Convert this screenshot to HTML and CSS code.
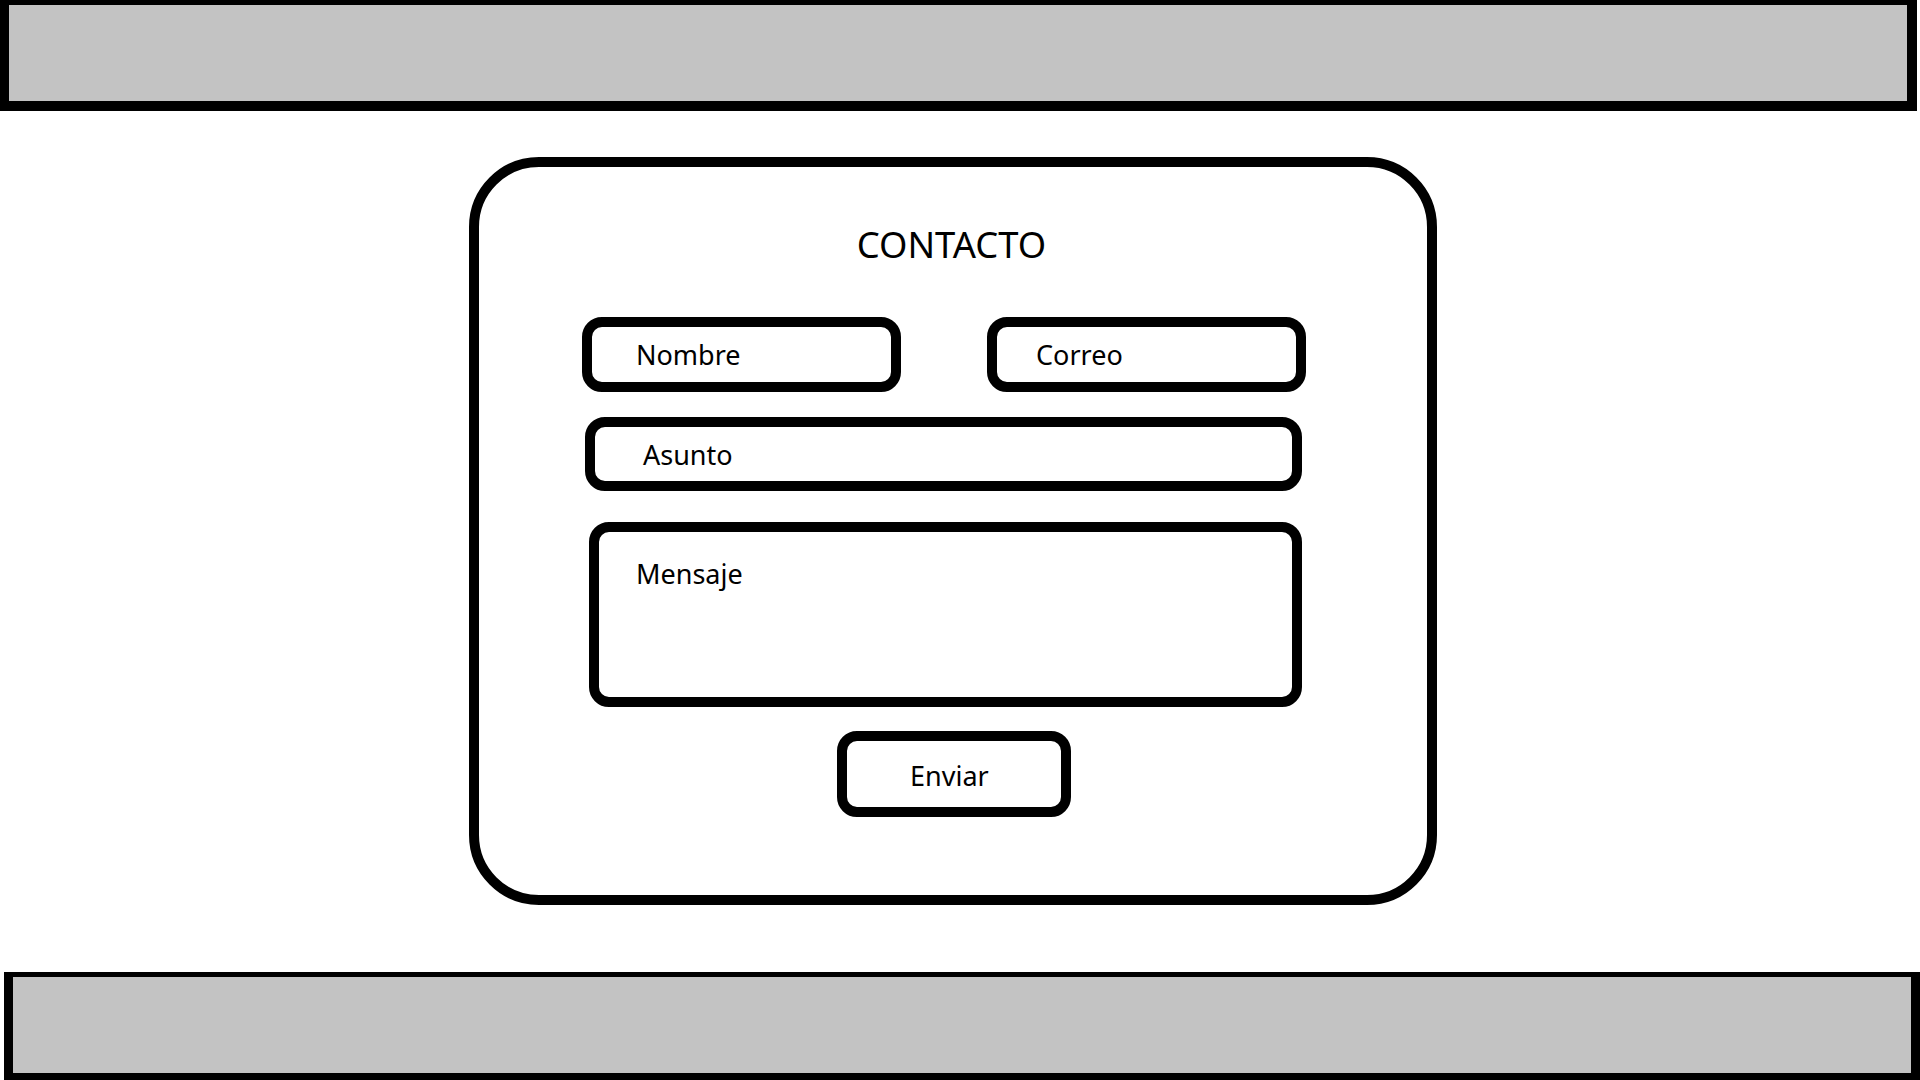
FILE: index.html
```html
<!DOCTYPE html>
<html lang="es">
<head>
<meta charset="utf-8">
<title>Contacto</title>
<link rel="stylesheet" href="styles.css">
</head>
<body>
<div class="page">
  <header class="topbar"></header>
  <main class="card">
    <h1 class="title">CONTACTO</h1>
    <div class="row">
      <div class="field field-nombre"><span class="label label-nombre">Nombre</span></div>
      <div class="field field-correo"><span class="label label-correo">Correo</span></div>
    </div>
    <div class="field field-asunto"><span class="label label-asunto">Asunto</span></div>
    <div class="field field-mensaje"><span class="label label-mensaje">Mensaje</span></div>
    <div class="button"><span class="label label-enviar">Enviar</span></div>
  </main>
  <footer class="bottombar"></footer>
</div>
</body>
</html>
```
FILE: styles.css
```css
html, body {
  margin: 0;
  padding: 0;
  background: #ffffff;
  overflow: hidden;
}
.page {
  width: 1920px;
  height: 1080px;
  display: flex;
  flex-direction: column;
  align-items: flex-start;
  overflow: hidden;
  font-family: "Noto Sans", "Open Sans", sans-serif;
  color: #000;
}
.topbar {
  flex: none;
  box-sizing: border-box;
  width: 1918px;
  height: 116px;
  margin: -5px 0 0 -1px;
  background: #c3c3c3;
  border: 10px solid #000;
}
.card {
  flex: none;
  box-sizing: border-box;
  width: 968px;
  height: 748px;
  margin: 46px 0 0 469px;
  border: 10px solid #000;
  border-radius: 70px;
  display: flex;
  flex-direction: column;
  align-items: flex-start;
}
.title {
  margin: 57px 0 53px 0;
  width: 100%;
  text-align: center;
  font-size: 36.4px;
  font-weight: 400;
  line-height: 40px;
  height: 40px;
  padding-right: 3px;
  box-sizing: border-box;
}
.row {
  display: flex;
  gap: 86px;
  margin-left: 103px;
}
.field, .button {
  box-sizing: border-box;
  border: 10px solid #000;
  border-radius: 20px;
  display: flex;
  align-items: center;
  background: #fff;
}
.label {
  font-size: 27px;
  line-height: 55px;
  white-space: nowrap;
}
.field-nombre {
  width: 319px;
  height: 75px;
  padding-left: 44px;
}
.field-correo {
  width: 319px;
  height: 75px;
  padding-left: 39px;
}
.field-asunto {
  width: 717px;
  height: 74px;
  margin: 25px 0 0 106px;
  padding-left: 48px;
}
.field-mensaje {
  width: 713px;
  height: 185px;
  margin: 31px 0 0 110px;
  padding: 23px 0 0 37px;
  align-items: flex-start;
}
.label-mensaje {
  line-height: 38px;
}
.button {
  width: 234px;
  height: 86px;
  margin: 24px 0 0 358px;
  padding: 4px 0 0 63px;
}
.label-enviar {
  line-height: 62px;
}
.bottombar {
  flex: none;
  box-sizing: border-box;
  width: 1916px;
  height: 108px;
  margin: 67px 0 0 4px;
  background: #c3c3c3;
  border-style: solid;
  border-color: #000;
  border-width: 5px 9px 7px 9px;
}
```
